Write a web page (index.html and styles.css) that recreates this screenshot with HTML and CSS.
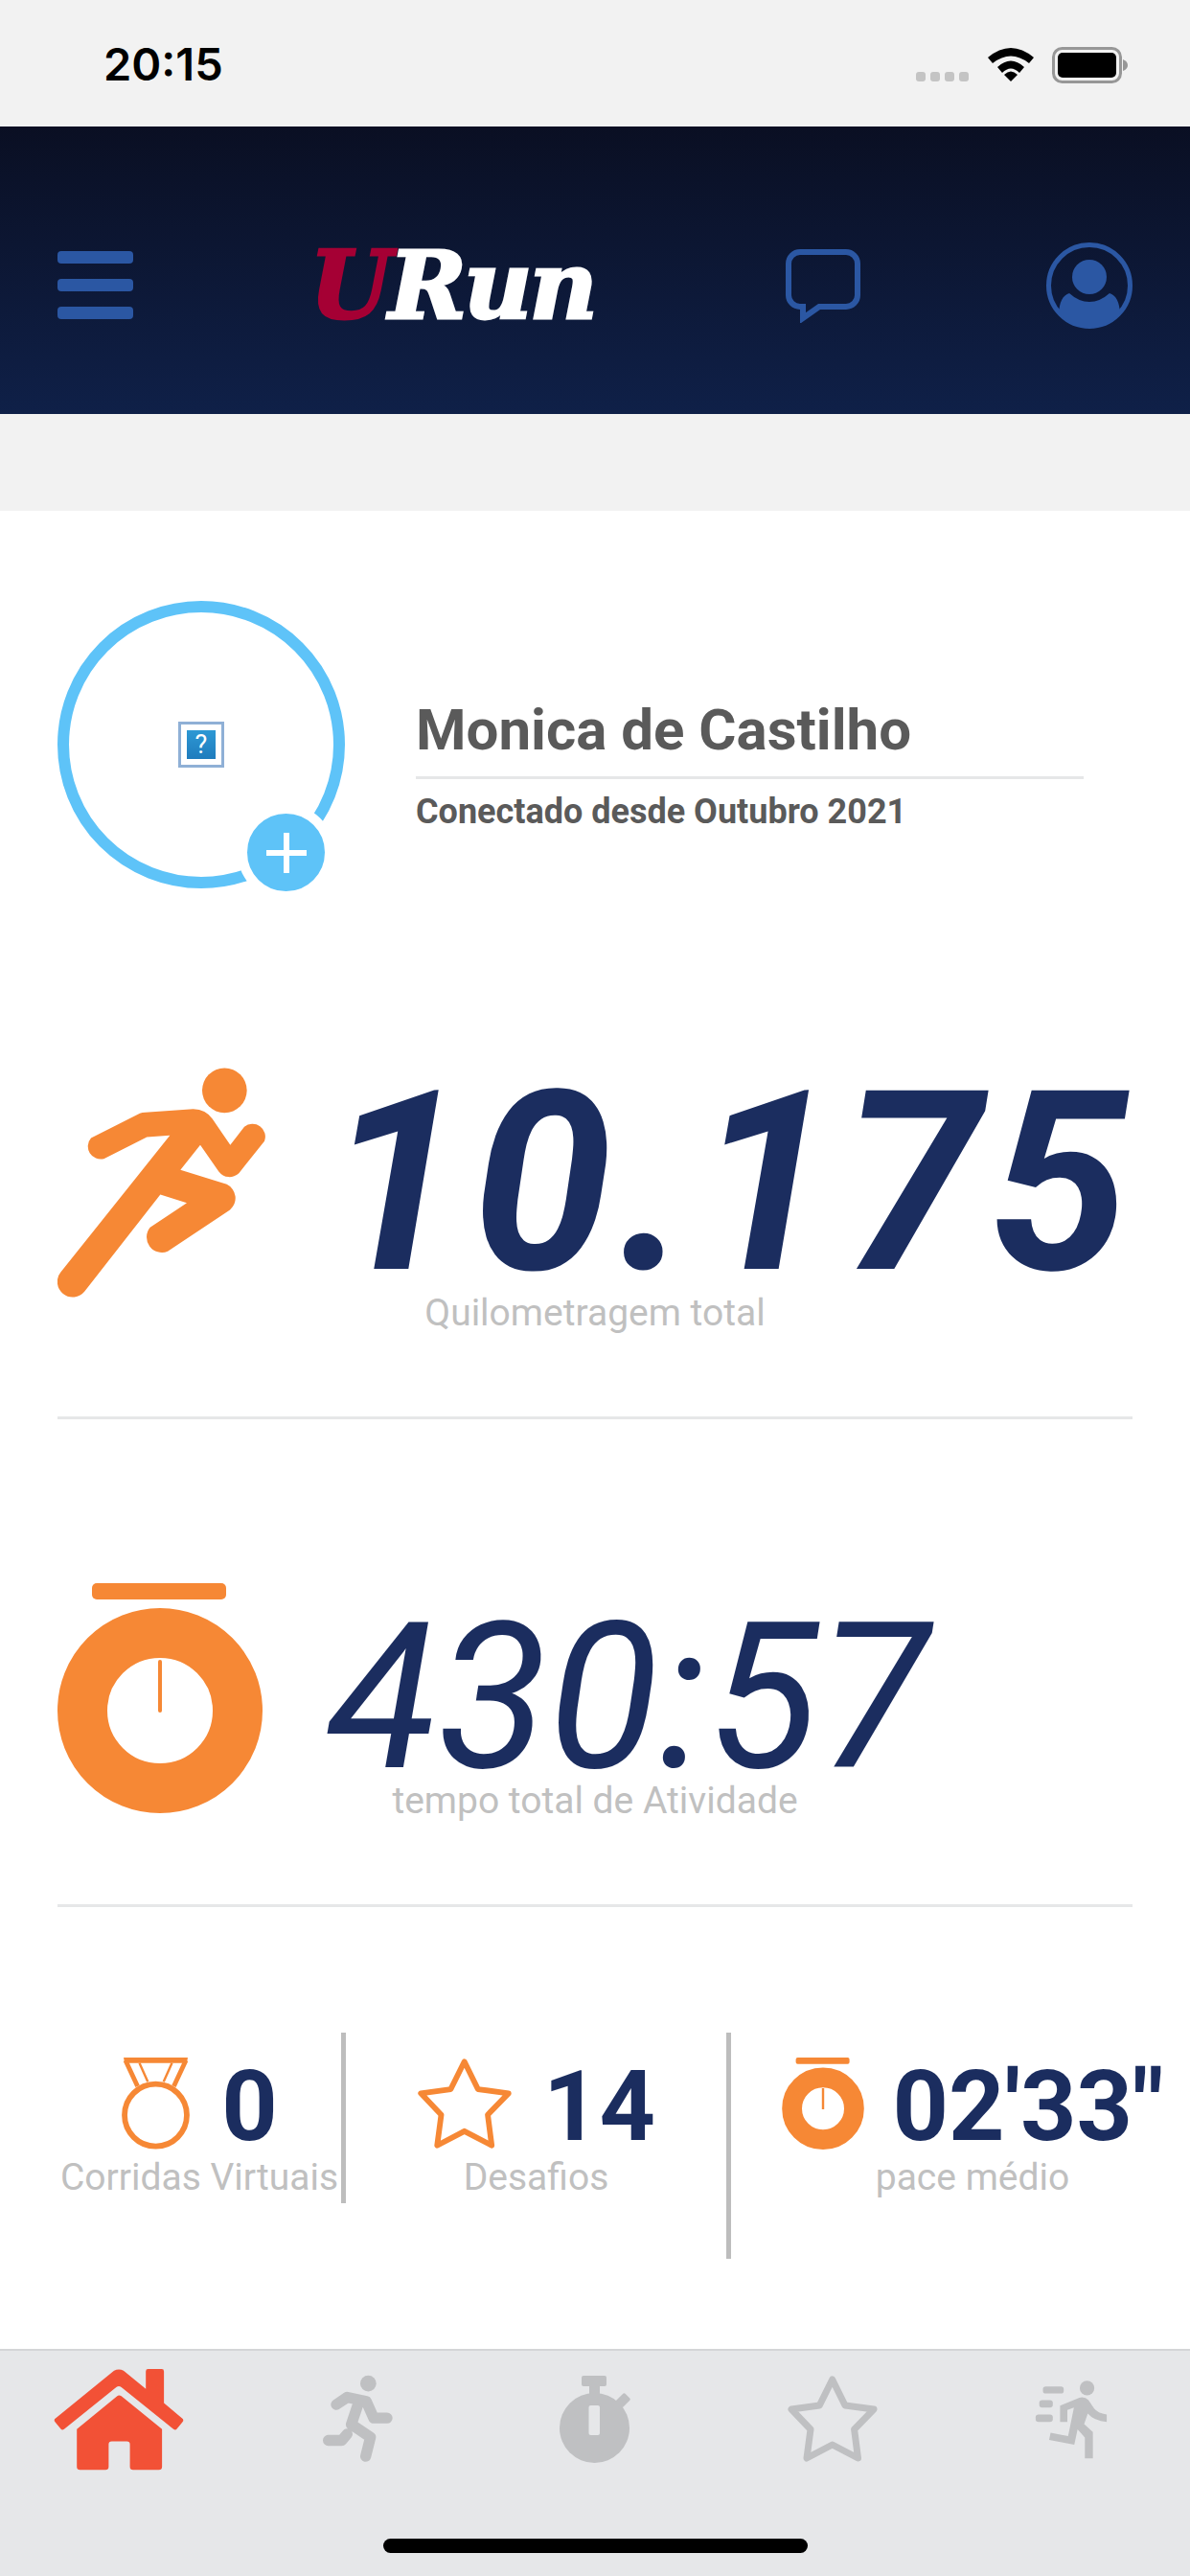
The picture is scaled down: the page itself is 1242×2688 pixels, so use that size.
FILE: index.html
```html
<!DOCTYPE html>
<html lang="pt-BR">
<head>
    <meta charset="UTF-8">
    <meta name="viewport" content="width=device-width, initial-scale=1.0">
    <title>URun</title>
    <link rel="stylesheet" href="styles.css">
</head>
<body>

    <!-- Status bar -->
    <div class="status-bar">
        <span class="clock">20:15</span>
        <div class="status-icons">
            <div class="signal"><i></i><i></i><i></i><i></i></div>
            <svg class="wifi" viewBox="0 0 48 36">
                <path d="M0 11 Q24 -9 48 11 L43 17 Q24 2 5 17 Z"/>
                <path d="M10 21 Q24 8 38 21 L33 27 Q24 18 15 27 Z"/>
                <path d="M17 29 Q24 22 31 29 L24 36 Z"/>
            </svg>
            <svg class="battery" viewBox="0 0 80 38">
                <rect x="1.5" y="1.5" width="70" height="35" rx="9" fill="none" stroke="#979797" stroke-width="3"/>
                <rect x="6" y="6" width="61" height="26" rx="5"/>
                <path d="M74 13 Q79 15 79 19 Q79 23 74 25 Z" fill="#979797"/>
            </svg>
        </div>
    </div>

    <!-- Header -->
    <header class="top-bar">
        <div class="menu-icon"><i></i><i></i><i></i></div>
        <div class="logo"><span class="logo-u">U</span><span class="logo-run">Run</span></div>
        <svg class="chat-icon" viewBox="0 0 78 77">
            <path d="M15 3 H63 a12 12 0 0 1 12 12 V48 a12 12 0 0 1 -12 12 H35 L18 72 V60 H15 a12 12 0 0 1 -12 -12 V15 a12 12 0 0 1 12 -12 Z" fill="none" stroke="#2b57a3" stroke-width="6"/>
        </svg>
        <svg class="profile-icon" viewBox="0 0 90 90">
            <circle cx="45" cy="45" r="42.5" fill="none" stroke="#2b57a3" stroke-width="5"/>
            <circle cx="45" cy="36" r="18" fill="#2b57a3"/>
            <path d="M13 74 Q14 56 24 53 Q34 62 45 62 Q56 62 66 53 Q76 56 77 74 A 42 42 0 0 1 13 74 Z" fill="#2b57a3"/>
        </svg>
    </header>

    <div class="band"></div>

    <main class="content">
        <section class="profile">
            <div class="avatar">
                <div class="broken-image"><span>?</span></div>
                <div class="avatar-add">
                    <svg viewBox="0 0 42 42"><path d="M18 0 H24 V18 H42 V24 H24 V42 H18 V24 H0 V18 H18 Z" fill="#fff"/></svg>
                </div>
            </div>
            <div class="profile-text">
                <h2 class="profile-name">Monica de Castilho</h2>
                <p class="profile-since">Conectado desde Outubro 2021</p>
            </div>
        </section>

        <section class="stat stat-distance">
            <div class="stat-main">
                <svg class="runner-icon" viewBox="60 70 660 725">
                    <circle cx="583" cy="141" r="70" fill="#f68835"/>
                    <path d="M165 290 L318 213 Q325 210 335 210 L485 199 Q525 200 545 230 L601 312 L645 255 A40 40 0 0 1 708 300 L628 400 A42 42 0 0 1 565 395 L507 312 L445 390 L590 435 A48 48 0 0 1 600 515 L405 645 A48 48 0 0 1 350 570 L465 493 L382 467 L145 770 A48 48 0 0 1 70 710 L412 282 L340 287 L205 355 A40 40 0 0 1 165 290 Z" fill="#f68835"/>
                </svg>
                <span class="stat-km">10.175</span>
            </div>
            <p class="stat-label">Quilometragem total</p>
        </section>

        <section class="stat stat-time">
            <div class="stat-main">
                <svg class="watch-icon" viewBox="0 0 214 240">
                    <rect x="36" y="0" width="140" height="17" rx="5" fill="#f68835"/>
                    <circle cx="107" cy="133" r="81" fill="none" stroke="#f68835" stroke-width="52"/>
                    <rect x="105" y="80" width="4" height="55" rx="2" fill="#f68835"/>
                </svg>
                <span class="stat-hours">430:57</span>
            </div>
            <p class="stat-label">tempo total de Atividade</p>
        </section>

        <section class="summary">
            <div class="summary-cell cell-races">
                <div class="summary-head">
                    <svg class="medal-icon" viewBox="0 0 73 99" fill="none" stroke="#f68835">
                        <circle cx="36.5" cy="62" r="33.5" stroke-width="6"/>
                        <path d="M2 0 H71 L70 6 H3 Z" fill="#f68835" stroke="none"/>
                        <path d="M4 3 L17 31 M69 3 L56 31" stroke-width="5"/>
                        <path d="M19 6 L28 26 M54 6 L45 26" stroke-width="2.5"/>
                    </svg>
                    <span class="summary-value">0</span>
                </div>
                <p class="stat-label">Corridas Virtuais</p>
            </div>
            <div class="summary-cell cell-challenges">
                <div class="summary-head">
                    <svg class="star-icon" viewBox="0 0 94 90" preserveAspectRatio="none">
                        <polygon points="46.7,4 60,31 90,35 69.6,56 73.5,86 46.7,72 20,86 24,56 4,35 33.3,31" fill="none" stroke="#f68835" stroke-width="5.5" stroke-linejoin="round"/>
                    </svg>
                    <span class="summary-value">14</span>
                </div>
                <p class="stat-label">Desafios</p>
            </div>
            <div class="summary-cell cell-pace">
                <div class="summary-head">
                    <svg class="watch-small" viewBox="0 0 214 240">
                        <rect x="36" y="0" width="140" height="17" rx="5" fill="#f68835"/>
                        <circle cx="107" cy="133" r="81" fill="none" stroke="#f68835" stroke-width="52"/>
                        <rect x="104" y="80" width="6" height="55" fill="#f68835"/>
                    </svg>
                    <span class="summary-value">02'33"</span>
                </div>
                <p class="stat-label">pace médio</p>
            </div>
        </section>
    </main>

    <!-- Bottom tabs -->
    <nav class="tab-bar">
        <div class="tabs">
            <div class="tab">
                <svg class="tab-home" viewBox="45 30 410 322">
                    <path d="M48 190 L235 38 Q250 30 265 38 L335 95 V40 Q335 33 342 33 H385 Q392 33 392 40 V140 L452 190 Q455 195 450 200 L432 222 Q428 226 422 222 L258 90 Q250 84 242 90 L78 222 Q72 226 68 222 L50 200 Q45 195 48 190 Z" fill="#f25136"/>
                    <path d="M118 222 L245 118 Q250 113 258 118 L386 222 V340 Q386 350 376 350 H295 Q285 350 285 340 V270 Q285 260 275 260 H228 Q218 260 218 270 V340 Q218 350 208 350 H128 Q118 350 118 340 Z" fill="#f25136"/>
                </svg>
            </div>
            <div class="tab">
                <svg class="tab-run" viewBox="880 55 225 275">
                    <circle cx="1028" cy="82" r="25" fill="#bfc0c2"/>
                    <path d="M928 148 L962 125 L1022 138 L1045 190 H1087 M1000 135 L975 210 L1035 250 L1020 310 M903 260 H945 L962 240" fill="none" stroke="#bfc0c2" stroke-width="34" stroke-linecap="round" stroke-linejoin="round"/>
                </svg>
            </div>
            <div class="tab">
                <svg class="tab-watch" viewBox="0 0 74 91">
                    <rect x="23" y="0" width="26" height="11" rx="2" fill="#bfc0c2"/>
                    <rect x="31" y="10" width="11" height="12" fill="#bfc0c2"/>
                    <rect x="61" y="19" width="10" height="14" rx="2" transform="rotate(45 66 26)" fill="#bfc0c2"/>
                    <circle cx="36.5" cy="54.5" r="36.5" fill="#bfc0c2"/>
                    <rect x="30.5" y="31" width="11.5" height="31" rx="2" fill="#e6e7e9"/>
                </svg>
            </div>
            <div class="tab">
                <svg class="tab-star" viewBox="0 0 94 90">
                    <polygon points="46.7,4 60,31 90,35 69.6,56 73.5,86 46.7,72 20,86 24,56 4,35 33.3,31" fill="none" stroke="#bfc0c2" stroke-width="7" stroke-linejoin="round"/>
                </svg>
            </div>
            <div class="tab">
                <svg class="tab-sprint" viewBox="1330 40 205 250" preserveAspectRatio="none" fill="#bfc0c2">
                    <ellipse cx="1476" cy="67" rx="20" ry="23"/>
                    <rect x="1355" y="62" width="57" height="22" rx="8"/>
                    <rect x="1345" y="105" width="37" height="23" rx="8"/>
                    <rect x="1335" y="150" width="47" height="23" rx="8"/>
                    <path d="M1402 122 L1455 97 Q1470 93 1480 105 L1495 130 Q1505 145 1530 150 V173 Q1495 170 1478 147 L1468 180 L1492 205 V288 H1470 V222 L1450 197 L1441 245 L1372 230 L1376 207 L1424 218 L1440 128 L1422 136 V173 H1402 Z"/>
                </svg>
            </div>
        </div>
        <div class="home-indicator"></div>
    </nav>

</body>
</html>
```

FILE: styles.css
```css
/* Base styling */
* {
    box-sizing: border-box;
}

body {
    font-family: 'Roboto', sans-serif;
    margin: 0;
    width: 1242px;
    height: 2688px;
    overflow: hidden;
    background: #ffffff;
    display: flex;
    flex-direction: column;
}

h2,
p {
    margin: 0;
}

/* Status bar */
.status-bar {
    height: 132px;
    background: #f2f2f2;
    display: flex;
    justify-content: space-between;
    padding: 49px 64px 0 108px;
}

.clock {
    font-family: 'Inter', sans-serif;
    font-size: 47px;
    font-weight: 600;
    line-height: 36px;
    color: #000;
}

.status-icons {
    display: flex;
    align-items: flex-start;
}

.signal {
    display: flex;
    gap: 5px;
    margin-top: 26px;
    margin-right: 20px;
}

.signal i {
    width: 10px;
    height: 10px;
    border-radius: 3px;
    background: #c4c4c4;
}

.wifi {
    width: 48px;
    height: 36px;
    margin-right: 19px;
}

.battery {
    width: 80px;
    height: 38px;
}

/* Header */
.top-bar {
    height: 300px;
    padding: 32px 60px 0;
    background: linear-gradient(to bottom, #0a0f23, #0f2048);
    display: flex;
    align-items: center;
    justify-content: space-between;
}

.menu-icon {
    width: 79px;
    display: flex;
    flex-direction: column;
    gap: 16px;
    margin-top: -2px;
}

.menu-icon i {
    height: 13px;
    border-radius: 4px;
    background: #2b57a3;
}

.logo {
    width: 292px;
    margin: 0 10px 0 -10px;
    font-family: 'DejaVu Serif', serif;
    font-size: 98px;
    font-weight: 700;
    font-style: italic;
    line-height: 76px;
    letter-spacing: -3px;
    white-space: nowrap;
    -webkit-text-stroke: 3px;
}

.logo-u {
    color: #a50034;
}

.logo-run {
    color: #fff;
}

.chat-icon {
    width: 78px;
    height: 77px;
}

.profile-icon {
    width: 90px;
    height: 90px;
}

.band {
    height: 101px;
    background: #f2f2f2;
}

/* Main content */
.content {
    height: 1918px;
    padding-top: 94px;
}

.profile {
    display: flex;
    padding-left: 60px;
}

.avatar {
    position: relative;
    width: 300px;
    height: 300px;
    border: 12px solid #5ec3f8;
    border-radius: 50%;
    display: flex;
    align-items: center;
    justify-content: center;
}

.broken-image {
    width: 48px;
    height: 48px;
    padding: 6px;
    background: #fff;
    border: 3px solid #8fb0d6;
    display: flex;
}

.broken-image span {
    flex: 1;
    background: linear-gradient(to bottom, #2d98d4, #1f7cbd);
    color: #fff;
    font-size: 27px;
    font-weight: 400;
    line-height: 30px;
    text-align: center;
}

.avatar-add {
    position: absolute;
    left: 176px;
    top: 200px;
    width: 101px;
    height: 101px;
    border: 10px solid #fff;
    border-radius: 50%;
    background: #5ec3f8;
    display: flex;
    align-items: center;
    justify-content: center;
}

.avatar-add svg {
    width: 42px;
    height: 42px;
}

.profile-text {
    width: 697px;
    margin-left: 74px;
    padding-top: 100px;
}

.profile-name {
    font-size: 60px;
    font-weight: 700;
    line-height: 70px;
    color: #5a5a5a;
    padding-bottom: 13px;
    border-bottom: 3px solid #e6e7e8;
}

.profile-since {
    margin-top: 13px;
    font-size: 36px;
    font-weight: 700;
    line-height: 42px;
    color: #5a5a5a;
}

/* Big numbers */
.stat {
    margin: 0 60px;
    border-bottom: 3px solid #e6e7e8;
}

.stat-main {
    display: flex;
    align-items: flex-start;
}

.stat-label {
    font-size: 39px;
    line-height: 42px;
    color: #c0c0c0;
    text-align: center;
}

.stat-distance {
    margin-top: 187px;
    height: 367px;
}

.stat-distance .stat-label {
    margin-top: -7px;
}

.runner-icon {
    width: 220px;
    height: 242px;
    flex: none;
}

.stat-km {
    margin-left: 60px;
    font-size: 262px;
    font-weight: 700;
    font-style: italic;
    line-height: 242px;
    letter-spacing: 7px;
    color: #1b2d5f;
}

.stat-time {
    margin-top: 171px;
    height: 338px;
}

.watch-icon {
    width: 214px;
    height: 240px;
    flex: none;
}

.stat-hours {
    margin-left: 67px;
    font-size: 212px;
    font-style: italic;
    line-height: 240px;
    color: #1b2d5f;
}

.stat-time .stat-label {
    margin-top: -34px;
}

/* Summary row */
.summary {
    display: flex;
    align-items: flex-start;
    margin-top: 131px;
}

.summary-cell {
    padding-top: 26px;
    display: flex;
    flex-direction: column;
    align-items: center;
}

.summary-cell .stat-label {
    margin-top: 5px;
}

.cell-races {
    flex: 0 0 361px;
    height: 178px;
    padding-left: 60px;
    border-right: 5px solid #bdbdbd;
}

.cell-challenges {
    flex: 0 0 402px;
    height: 236px;
    border-right: 5px solid #bdbdbd;
}

.cell-pace {
    flex: 0 0 504px;
}

.summary-head {
    display: flex;
    align-items: flex-start;
    gap: 32px;
}

.cell-pace .summary-head {
    gap: 30px;
}

.summary-value {
    margin-top: 3px;
    font-size: 102px;
    font-weight: 700;
    line-height: 96px;
    color: #1b2d5f;
}

.medal-icon {
    width: 73px;
    height: 96px;
}

.star-icon {
    width: 100px;
    height: 96px;
}

.watch-small {
    width: 86px;
    height: 96px;
}

/* Bottom tabs */
.tab-bar {
    flex: 1;
    background: #e6e7e9;
    border-top: 2px solid #d4d5d7;
    display: flex;
    flex-direction: column;
    align-items: center;
    padding-top: 18px;
}

.tabs {
    width: 100%;
    height: 106px;
    display: flex;
}

.tab {
    flex: 1;
    display: flex;
    align-items: center;
    justify-content: center;
}

.tab-home {
    width: 136px;
    height: 107px;
}

.tab-run {
    width: 75px;
    height: 92px;
}

.tab-watch {
    width: 74px;
    height: 91px;
}

.tab-star {
    width: 94px;
    height: 90px;
}

.tab-sprint {
    width: 78px;
    height: 83px;
}

.home-indicator {
    width: 443px;
    height: 15px;
    margin-top: 72px;
    border-radius: 8px;
    background: #000;
}
```
